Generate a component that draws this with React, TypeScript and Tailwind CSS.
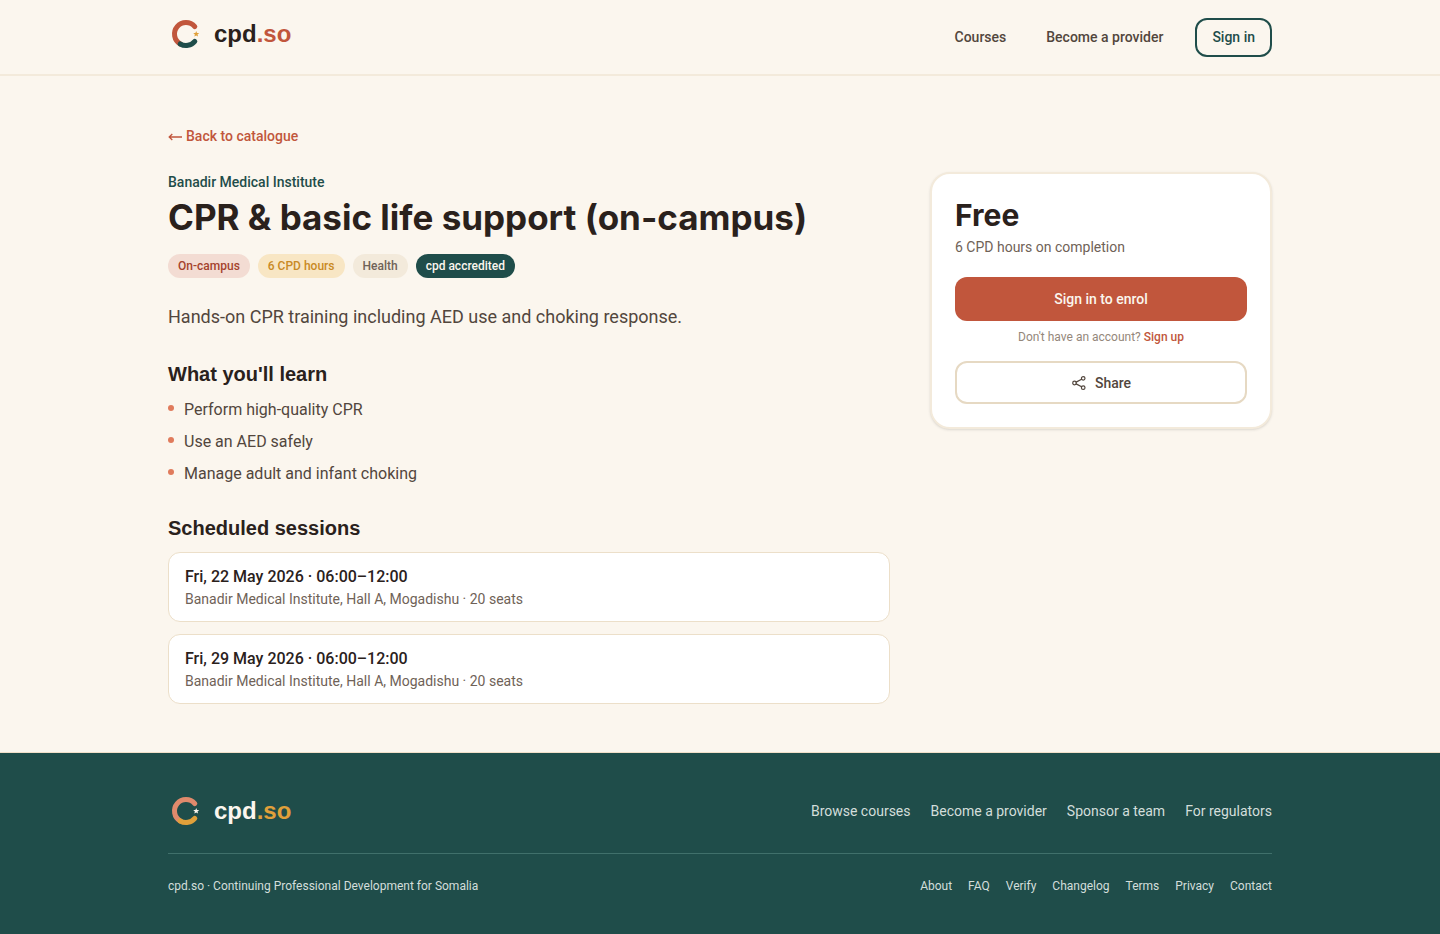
import React from 'react';

interface Session {
  when: string;
  where: string;
}

const outcomes = ['Perform high-quality CPR', 'Use an AED safely', 'Manage adult and infant choking'];

const sessions: Session[] = [
  { when: 'Fri, 22 May 2026 · 06:00–12:00', where: 'Banadir Medical Institute, Hall A, Mogadishu · 20 seats' },
  { when: 'Fri, 29 May 2026 · 06:00–12:00', where: 'Banadir Medical Institute, Hall A, Mogadishu · 20 seats' },
];

const footerLinks = ['Browse courses', 'Become a provider', 'Sponsor a team', 'For regulators'];
const legalLinks = ['About', 'FAQ', 'Verify', 'Changelog', 'Terms', 'Privacy', 'Contact'];

const Logo: React.FC<{ inverse?: boolean }> = ({ inverse = false }) => {
  const top = inverse ? '#e08a6c' : '#c1563c';
  const bottom = inverse ? '#e0a03a' : '#1f4d4a';
  const star = inverse ? '#fbf6ee' : '#e0a03a';

  return (
    <span className="flex items-center gap-2.5">
      <svg className="w-9 h-9" viewBox="0 0 36 36" fill="none" aria-hidden="true">
        <path d="M26.8 10.6A11.5 11.5 0 1 0 12.25 27.96" stroke={top} strokeWidth="5" strokeLinecap="round" />
        <path d="M12.25 27.96A11.5 11.5 0 0 0 26.8 25.4" stroke={bottom} strokeWidth="5" strokeLinecap="round" />
        <path d="M28.2 15l.8 2 2.2.1-1.7 1.4.6 2.1-1.9-1.2-1.9 1.2.6-2.1-1.7-1.4 2.2-.1z" fill={star} />
      </svg>
      <span className={`text-2xl leading-9 font-bold font-['Liberation_Sans',sans-serif] ${inverse ? 'text-[#fbf6ee]' : 'text-[#2a211c]'}`}>
        cpd<span className={inverse ? 'text-[#e0a03a]' : 'text-[#c1563c]'}>.so</span>
      </span>
    </span>
  );
};

const App: React.FC = () => {
  return (
    <div className="min-h-screen flex flex-col bg-[#fbf6ee] text-[#2a211c] font-['HK_Grotesk','Roboto',sans-serif]">
      <header className="border-b-2 border-[#f3eadb]">
        <div className="max-w-6xl mx-auto px-6 py-4 flex items-center justify-between">
          <a href="#" className="pb-1.5"><Logo /></a>
          <nav className="flex items-center gap-2 text-sm font-medium text-[#52463d]">
            <a href="#" className="px-4 py-2">Courses</a>
            <a href="#" className="px-4 py-2">Become a provider</a>
            <a href="#" className="ml-2 px-[15px] py-2 leading-[19px] rounded-xl border-2 border-[#1f4d4a] text-[#1f4d4a]">Sign in</a>
          </nav>
        </div>
      </header>

      <main className="w-full max-w-6xl mx-auto px-6 py-12">
        <a href="#" className="flex items-center gap-1 w-fit text-sm leading-6 font-medium text-[#c1563c]">
          <svg className="w-3.5 h-3.5" viewBox="0 0 14 14" fill="none" stroke="currentColor" strokeWidth="1.3" aria-hidden="true">
            <path d="M14 8H1.5M4.3 5L1.2 8l3.1 3" />
          </svg>
          Back to catalogue
        </a>

        <div className="mt-6 grid grid-cols-1 lg:grid-cols-[1fr_342px] gap-10 items-start">
          <div>
            <p className="text-sm leading-[21px] font-medium text-[#1f4d4a]">Banadir Medical Institute</p>
            <h1 className="mt-1 text-[35px] leading-[41px] font-bold font-['Inter',sans-serif]">CPR &amp; basic life support (on-campus)</h1>
            <div className="mt-4 flex flex-wrap gap-2 text-xs leading-6 font-medium">
              <span className="px-2.5 rounded-full bg-[#f3dcd3] text-[#a5432d]">On-campus</span>
              <span className="px-2.5 rounded-full bg-[#f8e6c4] text-[#c98a25]">6 CPD hours</span>
              <span className="px-2.5 rounded-full bg-[#f3eadb] text-[#6f6257]">Health</span>
              <span className="px-2.5 rounded-full bg-[#1f4d4a] text-[#fbf6ee]">cpd accredited</span>
            </div>
            <p className="mt-6 text-lg leading-[30px] text-[#52463d]">Hands-on CPR training including AED use and choking response.</p>

            <h2 className="mt-[30px] mb-[11px] text-xl leading-[25px] font-bold font-['Liberation_Sans',sans-serif]">What you'll learn</h2>
            <ul className="space-y-2">
              {outcomes.map(item => (
                <li key={item} className="flex items-start gap-2.5 text-base text-[#52463d]">
                  <span className="mt-[7px] w-1.5 h-1.5 rounded-full bg-[#e07b5c]"></span>
                  {item}
                </li>
              ))}
            </ul>

            <h2 className="mt-[30px] mb-[11px] text-xl leading-[25px] font-bold font-['Liberation_Sans',sans-serif]">Scheduled sessions</h2>
            <ul className="space-y-3">
              {sessions.map(session => (
                <li key={session.when} className="px-4 py-3 rounded-xl border border-[#ecdfc9] bg-white">
                  <p className="text-base font-medium">{session.when}</p>
                  <p className="text-sm text-[#6f6257]">{session.where}</p>
                </li>
              ))}
            </ul>
          </div>

          <aside className="p-[23px] rounded-[20px] border-2 border-[#f3eadb] bg-white shadow-sm">
            <p className="text-3xl font-bold font-['Inter',sans-serif]">Free</p>
            <p className="mt-1 text-sm text-[#6f6257]">6 CPD hours on completion</p>
            <button className="mt-5 w-full h-11 rounded-xl bg-[#c1563c] text-sm font-medium text-[#fbf6ee]">Sign in to enrol</button>
            <p className="mt-2 text-xs text-center text-[#94877b]">
              Don't have an account? <a href="#" className="font-medium text-[#c1563c]">Sign up</a>
            </p>
            <button className="mt-4 w-full h-[43px] rounded-xl border-2 border-[#e6d9c3] flex items-center justify-center gap-2 text-sm font-medium text-[#52463d]">
              <svg className="w-4 h-4" viewBox="0 0 24 24" fill="none" stroke="currentColor" strokeWidth="1.8" strokeLinecap="round" strokeLinejoin="round" aria-hidden="true">
                <circle cx="5.3" cy="12" r="2.7" />
                <circle cx="18.3" cy="5" r="2.7" />
                <circle cx="18.3" cy="19" r="2.7" />
                <path d="M7.7 10.7l8.2-4.4M7.7 13.3l8.2 4.4" />
              </svg>
              Share
            </button>
          </aside>
        </div>
      </main>

      <footer className="flex-1 border-t border-[#f0dfc9] bg-[#1f4d4a] text-[#d3dedb]">
        <div className="max-w-6xl mx-auto px-6 py-10">
          <div className="pb-6 flex flex-wrap items-center justify-between gap-4 border-b border-[#40706b]">
            <a href="#"><Logo inverse /></a>
            <nav className="flex flex-wrap gap-5 text-sm">
              {footerLinks.map(label => <a key={label} href="#">{label}</a>)}
            </nav>
          </div>
          <div className="pt-6 flex flex-wrap items-center justify-between gap-4 text-xs">
            <p>cpd.so · Continuing Professional Development for Somalia</p>
            <nav className="flex flex-wrap gap-4">
              {legalLinks.map(label => <a key={label} href="#">{label}</a>)}
            </nav>
          </div>
        </div>
      </footer>
    </div>
  );
};

export default App;
